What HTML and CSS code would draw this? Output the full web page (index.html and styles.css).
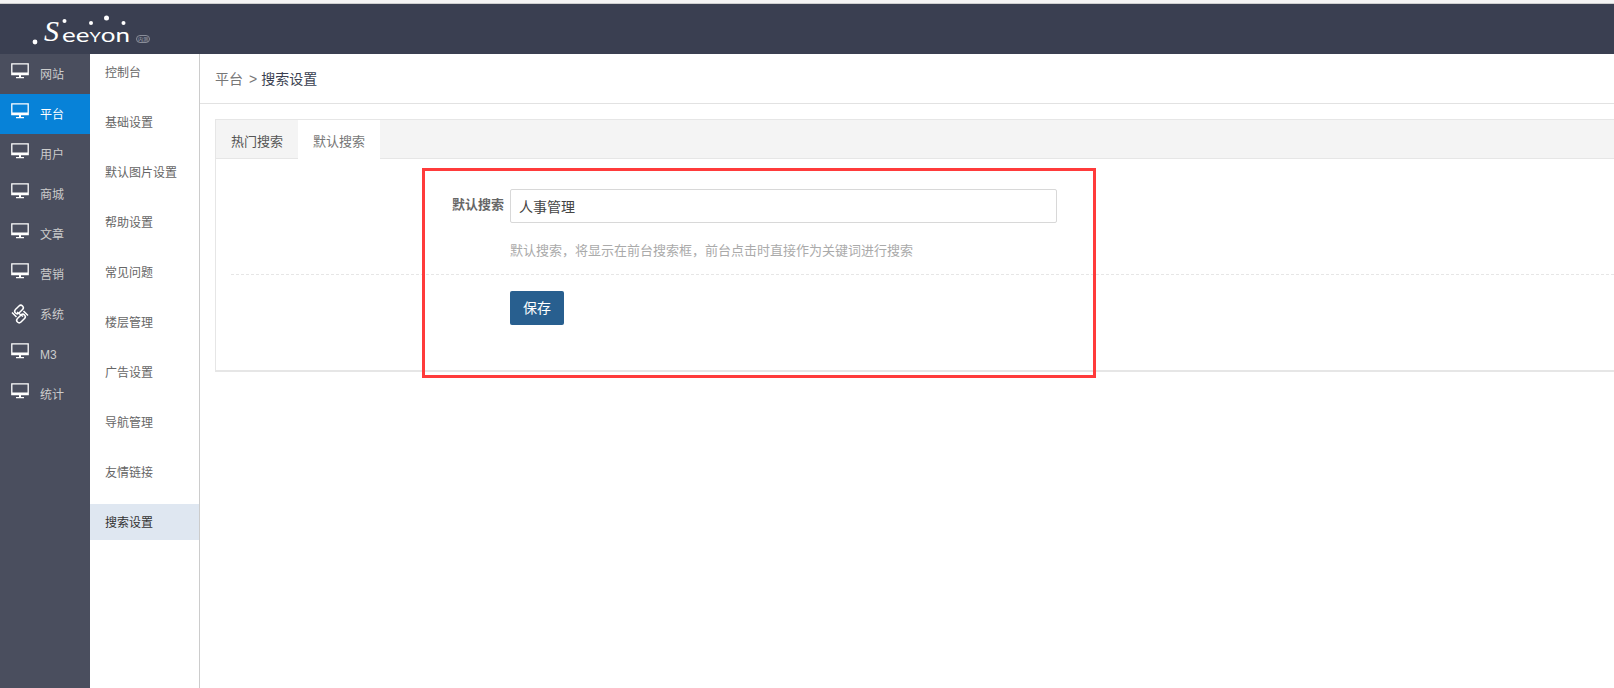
FILE: index.html
```html
<!DOCTYPE html>
<html lang="zh">
<head>
<meta charset="utf-8">
<title>搜索设置</title>
<link rel="stylesheet" href="styles.css">
</head>
<body>
<header class="topbar">
  <svg class="logo" width="125" height="50" viewBox="0 0 125 50">
    <g class="logo-dots"><circle cx="5" cy="38" r="2.400"/><circle cx="34.500" cy="17" r="2"/><circle cx="61" cy="19" r="2"/><circle cx="76.500" cy="14" r="2.500"/><circle cx="93.500" cy="19" r="2"/></g>
    <text class="logo-s" x="14" y="37">S</text>
    <text class="logo-word" x="32" y="38" textLength="68" lengthAdjust="spacingAndGlyphs">ee<tspan class="logo-cap">Y</tspan>on</text>
    <rect class="logo-pill" x="106.500" y="31.500" width="13" height="7" rx="3.500"/>
    <text class="logo-tag" x="113" y="37">内测</text>
  </svg>
</header>
<div class="body-row">
  <nav class="rail">
    <a class="rail-item"><svg class="mon" viewBox="0 0 18 16"><use href="#monitor"/></svg><span>网站</span></a>
    <a class="rail-item active"><svg class="mon" viewBox="0 0 18 16"><use href="#monitor"/></svg><span>平台</span></a>
    <a class="rail-item"><svg class="mon" viewBox="0 0 18 16"><use href="#monitor"/></svg><span>用户</span></a>
    <a class="rail-item"><svg class="mon" viewBox="0 0 18 16"><use href="#monitor"/></svg><span>商城</span></a>
    <a class="rail-item"><svg class="mon" viewBox="0 0 18 16"><use href="#monitor"/></svg><span>文章</span></a>
    <a class="rail-item"><svg class="mon" viewBox="0 0 18 16"><use href="#monitor"/></svg><span>营销</span></a>
    <a class="rail-item"><svg class="mon-sys" viewBox="0 0 18 18"><g fill="none" stroke="#fff" stroke-width="1.500"><rect x="5.500" y="-0.500" width="5" height="10" rx="2.500" transform="rotate(45 8 4.500)"/><rect x="7.500" y="8.500" width="5" height="10" rx="2.500" transform="rotate(45 10 13.500)"/><path d="M1 7.500 5.500 12M17 10.500 12.500 6M6 7l6 4.500"/></g></svg><span>系统</span></a>
    <a class="rail-item"><svg class="mon" viewBox="0 0 18 16"><use href="#monitor"/></svg><span>M3</span></a>
    <a class="rail-item"><svg class="mon" viewBox="0 0 18 16"><use href="#monitor"/></svg><span>统计</span></a>
  </nav>
  <aside class="submenu">
    <a class="sub-item">控制台</a>
    <a class="sub-item">基础设置</a>
    <a class="sub-item">默认图片设置</a>
    <a class="sub-item">帮助设置</a>
    <a class="sub-item">常见问题</a>
    <a class="sub-item">楼层管理</a>
    <a class="sub-item">广告设置</a>
    <a class="sub-item">导航管理</a>
    <a class="sub-item">友情链接</a>
    <a class="sub-item current">搜索设置</a>
  </aside>
  <main class="content">
    <div class="crumbs"><span class="crumb-root">平台</span><span class="crumb-sep">&gt;</span><span class="crumb-leaf">搜索设置</span></div>
    <section class="card">
      <div class="tabs">
        <a class="tab">热门搜索</a>
        <a class="tab on">默认搜索</a>
      </div>
      <div class="panel">
        <div class="field">
          <label class="field-label">默认搜索</label>
          <input class="field-input" type="text" value="人事管理">
        </div>
        <p class="hint">默认搜索，将显示在前台搜索框，前台点击时直接作为关键词进行搜索</p>
        <div class="rule"></div>
        <button class="save" type="button">保存</button>
      </div>
    </section>
  </main>
</div>
<div class="annotation"></div>
<svg width="0" height="0" class="defs"><defs><g id="monitor"><path d="M.8.8h16.400v10.700H.8z" fill="none" stroke="#fff" stroke-width="1.300"/><path d="M1 9.500h16v2.200H1zM8 12h2v2H8zM5 14h8v1.200H5z" fill="#fff"/></g></defs></svg>
</body>
</html>
```
FILE: styles.css
```css
* { box-sizing: border-box; }
html, body { height: 100%; }
body {
  margin: 0;
  padding-top: 3px;
  background: #f4f4f4;
  overflow: hidden;
  font-family: "Liberation Sans", "Noto Sans CJK SC", sans-serif;
  font-size: 12px;
  color: #333;
}
.topbar { height: 51px; background: #3a3f51; border-top: 1px solid #cfcfcf; padding-left: 30px; }
.logo { display: block; }
.logo-dots { fill: #fff; }
.logo-s { fill: #fff; font: italic 400 30px "Liberation Serif", serif; }
.logo-word { fill: #fff; font: 400 20px Lato, sans-serif; }
.logo-cap { font-size: 14px; }
.logo-pill { fill: none; stroke: #8a8e99; stroke-width: 1; }
.logo-tag { fill: #a5a8b1; font-size: 5px; text-anchor: middle; }
.body-row { display: flex; height: 634px; background: #fff; }
.rail { width: 90px; flex: none; background: #4a4e5e; }
.rail-item {
  display: flex; align-items: flex-start; height: 40px;
  padding: 9px 0 0 11px; color: #ccc;
}
.rail-item span { margin: 2px 0 0 11px; line-height: 20px; }
.rail-item.active { background: #0782d8; color: #fff; }
.mon { flex: none; width: 18px; height: 16px; display: block; overflow: visible; }
.mon-sys { flex: none; width: 18px; height: 18px; margin-top: 2px; display: block; overflow: visible; }
.submenu {
  width: 110px; flex: none;
  border-right: 1px solid #ccc;
  display: flex; flex-direction: column; gap: 14px;
}
.sub-item { display: block; height: 36px; line-height: 38px; padding-left: 15px; color: #666; }
.sub-item.current { background: #dfe7f1; color: #333; }
.content { flex: 1; min-width: 0; }
.crumbs {
  height: 50px; border-bottom: 1px solid #e2e2e2;
  padding-left: 15px; font-size: 14px; line-height: 50px;
  display: flex;
}
.crumb-root { color: #777; }
.crumb-sep { color: #777; margin: 0 4px 0 6px; }
.crumb-leaf { color: #3a3f51; }
.card {
  margin: 15px 0 0 15px;
  border: 1px solid #e6e6e6; border-right: 0;
  height: 253px;
  border-bottom-width: 2px;
}
.tabs { display: flex; height: 39px; background: #f4f4f4; border-bottom: 1px solid #e6e6e6; }
.tab { width: 82px; height: 39px; font-size: 13px; line-height: 44px; text-align: center; color: #555; }
.tab.on { background: #fff; color: #777; }
.panel { padding: 30px 0 0 0; }
.field { display: flex; padding-left: 236px; }
.field-label { width: 58px; font-size: 13px; font-weight: 700; line-height: 32px; color: #666; }
.field-input {
  width: 547px; height: 34px;
  border: 1px solid #d8d8d8; border-radius: 2px;
  padding: 0 9px 0 8px; outline: 0;
  font: 14px "Liberation Sans", "Noto Sans CJK SC", sans-serif;
  color: #444;
}
.hint { margin: 19px 0 0 294px; font-size: 13px; line-height: 18px; color: #aaa; }
.rule { margin: 14px 0 0 15px; border-top: 1px dashed #e6e6e6; }
.save {
  display: block; margin: 16px 0 0 294px;
  width: 54px; height: 34px; padding: 0 0 2px;
  border: 0; border-radius: 2px;
  background: #285f8f; color: #fff;
  font: 14px "Liberation Sans", "Noto Sans CJK SC", sans-serif;
}
.annotation {
  position: absolute; left: 422px; top: 168px;
  width: 674px; height: 210px;
  border: 3px solid #ff3b3b;
  pointer-events: none;
}
.defs { position: absolute; }
```
